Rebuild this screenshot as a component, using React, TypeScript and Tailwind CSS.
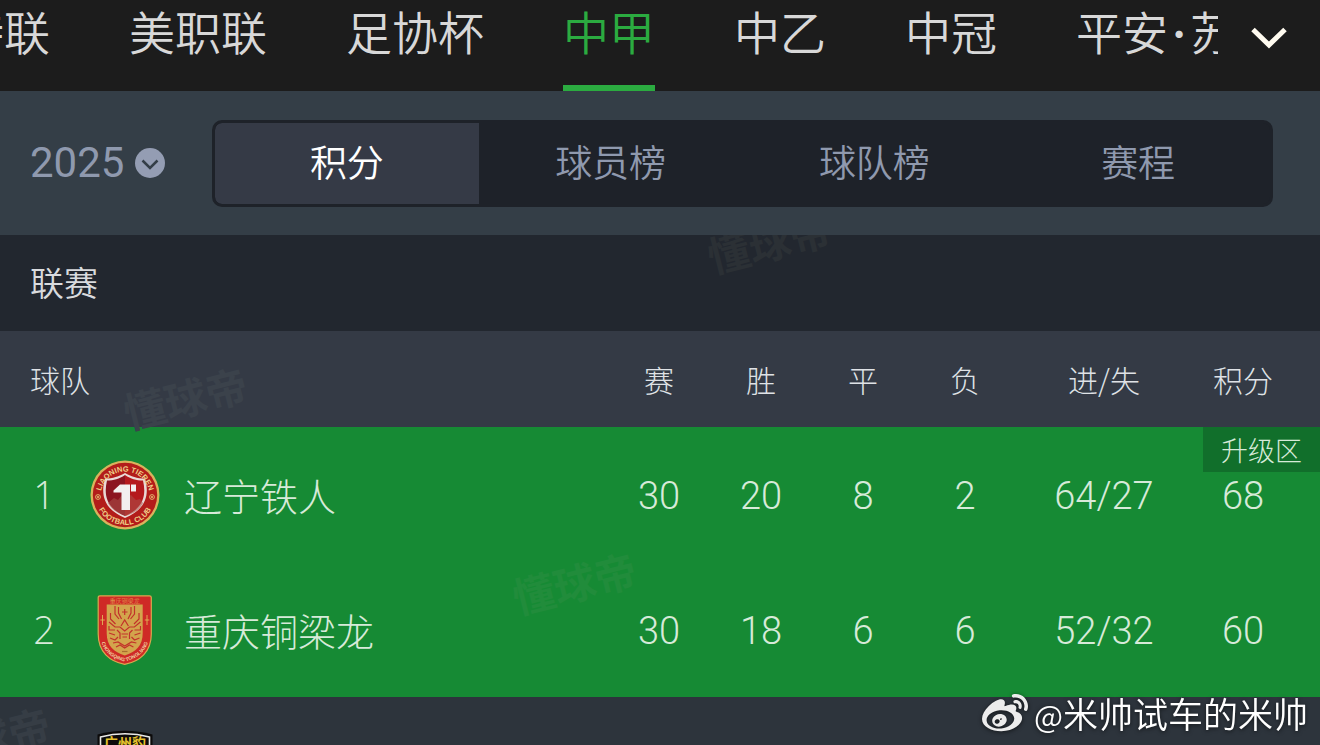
import { FaWeibo } from "react-icons/fa";

const leagues = ["沙特联", "美职联", "足协杯", "中甲", "中乙", "中冠"];
const views = ["积分", "球员榜", "球队榜", "赛程"];

function Watermark({ className }: { className: string }) {
  return (
    <span
      aria-hidden="true"
      className={`pointer-events-none absolute -rotate-[14deg] text-[42px] leading-[48px] font-bold whitespace-nowrap select-none ${className}`}
    >
      懂球帝
    </span>
  );
}

function LiaoningCrest() {
  return (
    <svg viewBox="0 0 70 70" className="size-[70px]" role="img" aria-label="辽宁铁人">
      <defs>
        <path id="ln-top" d="M10.500 36a24.500 24.500 0 0 1 49 0" />
        <path id="ln-bottom" d="M5 35a30 30 0 0 0 60 0" />
      </defs>
      <circle cx="35" cy="35" r="34.5" fill="#d9b35c" />
      <circle cx="35" cy="35" r="32.2" fill="#b31d1a" />
      <path d="M35 13c-6 3.500-12 5.500-20 5.500-4 14-3 30 20 39.500 23-9.500 24-25.500 20-39.500-8 0-14-2-20-5.500z" fill="#e9d9d6" />
      <path d="M35 15c-6 4-11 5.500-18 5.500-3 13-2 27 18 35.500z" fill="#8c1420" />
      <path d="M35 15c6 4 11 5.500 18 5.500 3 13 2 27-18 35.500z" fill="#b5191d" />
      <path d="M18 43l6-5 4 2 4-5 4 3 5-3 5 5 4-1 3 4c-3 6-8 10-17 13-9-3-15-7-18-13z" fill="#a95049" opacity=".55" />
      <path d="M23.500 30.500l6.500-6h10V50h-8.500V32.500h-8z" fill="#f2efef" />
      <path d="M41 24.500h5v7h-5z" fill="#f2efef" />
      <g fill="#efd089" fontFamily="Liberation Sans, sans-serif" fontWeight="700">
        <text fontSize="7.5">
          <textPath href="#ln-top" startOffset="50%" textAnchor="middle">LIAONING TIEREN</textPath>
        </text>
        <text fontSize="7.5">
          <textPath href="#ln-bottom" startOffset="50%" textAnchor="middle">FOOTBALL CLUB</textPath>
        </text>
      </g>
      <g fill="none" stroke="#e6c275" strokeWidth=".9">
        <circle cx="8" cy="37" r="2.400" />
        <circle cx="62" cy="37" r="2.400" />
      </g>
      <circle cx="8" cy="37" r="1" fill="#e6c275" />
      <circle cx="62" cy="37" r="1" fill="#e6c275" />
    </svg>
  );
}

function ChongqingCrest() {
  return (
    <svg viewBox="0 0 70 70" className="size-[70px]" role="img" aria-label="重庆铜梁龙">
      <defs>
        <path id="cq-arc" d="M10.500 42c1.500 14 11 21.500 24.200 24.500 13-3 22.700-10.500 24.200-24.500" />
      </defs>
      <path d="M10 .8h49.500q1.800 0 1.800 1.800V39c0 18-11.500 27.500-26.600 30.400C19.700 66.500 8.200 57 8.200 39V2.600Q8.200.8 10 .8z" fill="#cf2a26" stroke="#d8a94f" strokeWidth="1.200" />
      <path d="M16.700 9.500h36V38c0 13-7 19-18 22.500-11-3.500-18-9.500-18-22.500z" fill="#d3a44c" />
      <text x="34.700" y="7.600" textAnchor="middle" fontSize="6" fill="#e3b458" fontFamily="Noto Sans CJK SC, sans-serif">重庆铜梁龙</text>
      <g fill="none" stroke="#c2322a" strokeWidth="1.200">
        <path d="M25 11v8l4 5M28.500 12v6l3 6M44.500 11v8l-4 5M41 12v6l-3 6" />
        <path d="M34.700 14v6M32 17h5.500" />
        <path d="M20.500 18v6l5 5M49 18v6l-5 5M19 27l6 5h5l4.700 4 4.700-4h5l6-5" />
        <path d="M19 31v4h6M50.500 31v4h-6M19 38l6 2M50.500 38l-6 2M27 35l3 3v6M42.500 35l-3 3v6" />
        <path d="M31 31l3.700-6 3.700 6M31.500 39h6.500M32.500 42h4.500M20 43l5 2 3-3M49.500 43l-5 2-3-3" />
        <path d="M23 48l5-1 6.700 4 6.700-4 5 1M26 52l4-2 4.700 3 4.700-3 4 2" />
      </g>
      <g fill="none" stroke="#e3b458" strokeWidth=".9">
        <path d="M12.500 20v10M10.300 25h4.500M57 20v10M54.800 25h4.500" />
      </g>
      <path d="M32 56.500h5.500" stroke="#a9702f" strokeWidth="1.200" />
      <text fontSize="5" fill="#f0cfa0" fontFamily="Liberation Sans, sans-serif" fontWeight="700">
        <textPath href="#cq-arc" startOffset="50%" textAnchor="middle">CHONGQING TONGLIANG</textPath>
      </text>
    </svg>
  );
}

function GuangzhouCrest() {
  return (
    <svg viewBox="0 0 70 70" className="size-[70px]" role="img" aria-label="广州豹">
      <path d="M7.500 4.500Q35-3 62.500 4.500V40q0 20-27.500 29Q7.500 60 7.500 40z" fill="#0c0b0b" />
      <path d="M10.500 7Q35 .5 59.500 7v32q0 18-24.500 26Q10.500 57 10.500 39z" fill="none" stroke="#e9e9e6" strokeWidth="1.600" />
      <text x="35" y="18" textAnchor="middle" fontSize="14" fontWeight="700" fill="#e5c12c" fontFamily="Noto Sans CJK SC, sans-serif">广州豹</text>
    </svg>
  );
}

const teams = [
  { rank: 1, name: "辽宁铁人", crest: <LiaoningCrest />, stats: [30, 20, 8, 2, "64/27"], points: 68, zone: "升级区" },
  { rank: 2, name: "重庆铜梁龙", crest: <ChongqingCrest />, stats: [30, 18, 6, 6, "52/32"], points: 60, zone: "" },
];

export default function App() {
  return (
    <div className="relative h-screen overflow-hidden bg-[#2d343c] font-['Noto_Sans_CJK_SC',sans-serif] font-[350]">
      <header className="flex h-[91px] bg-[#1c1c1c]">
        <nav className="flex-1 overflow-hidden">
          <div className="-ml-[88px] flex w-max gap-[79px]">
            {leagues.map((l) => (
              <a
                key={l}
                href="#"
                aria-current={l === "中甲" ? "page" : undefined}
                className={`h-[91px] border-b-6 text-[46px] leading-[60px] whitespace-nowrap ${
                  l === "中甲" ? "border-[#2bab40] text-[#2bab40]" : "border-transparent text-[#d8d8d8]"
                }`}
              >
                {l}
              </a>
            ))}
            <a href="#" className="h-[91px] text-[46px] leading-[60px] whitespace-nowrap text-[#d8d8d8]">
              平安<span className="inline-block w-[22px] text-center font-[Inter,sans-serif] font-semibold">·</span>苏超
            </a>
          </div>
        </nav>
        <button type="button" aria-label="更多联赛" className="flex w-[102px] items-center justify-center pb-4">
          <svg viewBox="0 0 36 22" className="h-[22px] w-9" fill="none" stroke="#fffbf0" strokeWidth="5">
            <path d="M2 2.500L18 18 34 2.500" />
          </svg>
        </button>
      </header>

      <div className="flex h-36 items-center bg-[#343e47] pr-[47px]">
        <div className="flex w-[212px] items-center pl-[30px]">
          <select
            aria-label="赛季"
            defaultValue="2025"
            className="w-[105px] appearance-none bg-transparent font-[Roboto,sans-serif] text-[42px] leading-[48px] font-normal text-[#8f99ae]"
          >
            <option>2025</option>
          </select>
          <svg viewBox="0 0 30 30" className="size-[30px]" aria-hidden="true">
            <circle cx="15" cy="15" r="15" fill="#949db3" />
            <path d="M7.500 12.500l7.500 7.500 7.500-7.500" fill="none" stroke="#343e47" strokeWidth="2.500" />
          </svg>
        </div>
        <div className="flex h-[87px] flex-1 overflow-hidden rounded-[10px] border-3 border-[#1e2229] bg-[#1e2229]">
          {views.map((v, i) => (
            <button
              key={v}
              type="button"
              className={`flex-1 pb-1 text-[37px] leading-[77px] ${i === 0 ? "rounded-l-[7px] bg-[#353a46] text-white" : "text-[#8f99ae]"}`}
            >
              {v}
            </button>
          ))}
        </div>
      </div>

      <div className="relative h-24 overflow-hidden bg-[#22272f] pl-[30px]">
        <h2 className="text-[34px] leading-[94px] text-[#d9dbde]">联赛</h2>
        <Watermark className="-top-[18px] left-[706px] text-[#2b3035]" />
      </div>

      <table className="w-full table-fixed border-collapse text-[#dfe2e6]">
        <colgroup>
          <col />
          <col className="w-[102px]" />
          <col className="w-[102px]" />
          <col className="w-[102px]" />
          <col className="w-[102px]" />
          <col className="w-[176px]" />
          <col className="w-[128px]" />
        </colgroup>
        <thead>
          <tr className="h-24 bg-[#343a45] text-[30px]">
            <th className="relative p-0 pl-[30px] text-left font-light">
              球队
              <Watermark className="top-[42px] left-[122px] text-[#3b424b]" />
            </th>
            {["赛", "胜", "平", "负", "进/失"].map((h) => (
              <th key={h} className="p-0 font-light">{h}</th>
            ))}
            <th className="p-0 pr-[26px] font-light">积分</th>
          </tr>
        </thead>
        <tbody>
          {teams.map((t) => (
            <tr key={t.rank} className="h-[135px] bg-[#168a34] text-center text-[38px] text-[#d7ead9]">
              <td className="relative p-0">
                <div className="flex items-center font-light">
                  <span className="ml-6 w-10 text-center font-['Open_Sans',sans-serif]">{t.rank}</span>
                  <span className="mr-6 ml-[26px]">{t.crest}</span>
                  <span>{t.name}</span>
                </div>
                {t.rank === 2 && <Watermark className="-top-1 left-[511px] text-[#218c3b]" />}
              </td>
              {t.stats.map((s, i) => (
                <td key={i} className="p-0 pt-[3px] font-[Roboto,sans-serif] font-light">{s}</td>
              ))}
              <td className="relative p-0 pt-[3px] pr-[26px] font-[Roboto,sans-serif] font-light">
                {t.points}
                {t.zone && (
                  <span className="absolute top-0 right-0 w-[117px] bg-[#116f2b] font-['Noto_Sans_CJK_SC',sans-serif] text-[27px] leading-[45px]">
                    {t.zone}
                  </span>
                )}
              </td>
            </tr>
          ))}
          <tr className="h-[135px] bg-[#2d343c]">
            <td className="relative p-0 pl-[90px]" colSpan={7}>
              <GuangzhouCrest />
              <Watermark className="top-4 -left-[75px] text-[#363d45]" />
            </td>
          </tr>
        </tbody>
      </table>

      <div className="absolute right-3 bottom-1 flex items-center gap-1.5 text-white drop-shadow-[0_1px_2px_rgba(0,0,0,0.6)]">
        <FaWeibo className="size-[46px] text-[#ececec]" aria-hidden="true" />
        <span className="text-[35px] leading-[52px]">
          <span className="text-[31px]">@</span>米帅试车的米帅
        </span>
      </div>
    </div>
  );
}
